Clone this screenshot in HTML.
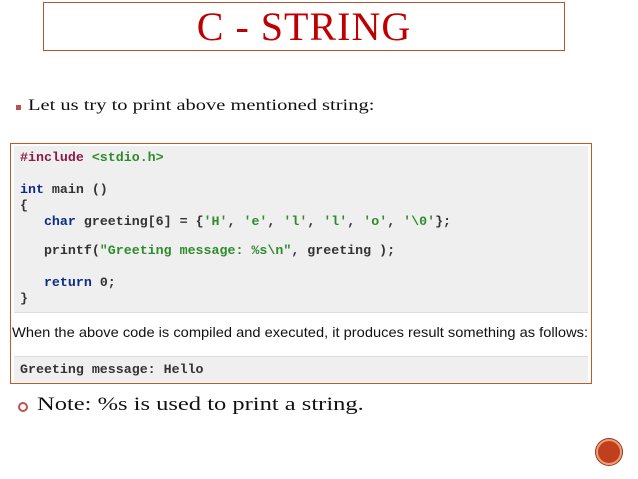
<!DOCTYPE html>
<html><head><style>
body{margin:0;width:638px;height:479px;background:#fff;position:relative;overflow:hidden;font-family:"Liberation Serif",serif}
.t{position:absolute;left:43px;top:2px;width:520px;height:47px;border:1px solid #b5552f;text-align:center;color:#c00000;font-size:40px;line-height:47px;letter-spacing:1px}
.b1{position:absolute;left:28px;top:97px;font-size:16px;color:#111;transform-origin:0 0;transform:scaleX(1.28);white-space:nowrap}
.sq{position:absolute;left:16px;top:105px;width:5px;height:5px;background:#c0504d}
.box{position:absolute;left:10px;top:143px;width:580px;height:239px;border:1px solid #c0582a;background:#fff}
.code{position:absolute;left:3px;top:2px;width:574px;height:166px;background:#efefef;border-bottom:1px solid #ddd}
pre{margin:0;position:absolute;font-family:"Liberation Mono",monospace;font-weight:bold;font-size:13.3px;color:#333}
.k{color:#0b2a8a}.s{color:#2e8b2e}.p{color:#8b1a4a}
.out{position:absolute;left:3px;top:212px;width:574px;height:25px;background:#efefef;border-top:1px solid #ddd}
.msg{position:absolute;left:1px;top:180px;font-family:"Liberation Sans",sans-serif;font-size:14px;color:#111;transform-origin:0 0;transform:scaleX(1.047);white-space:nowrap}
.note{position:absolute;left:37px;top:394px;font-size:19px;color:#111;transform-origin:0 0;transform:scaleX(1.29);white-space:nowrap}
.ci{position:absolute;left:18px;top:402px;width:6px;height:6px;border:2px solid #c0504d;border-radius:50%}
.dot{position:absolute;left:596px;top:439px;width:22px;height:22px;border-radius:50%;background:#c0401e;border:2px solid #e8a080;box-shadow:0 0 0 1px #a03010}
</style></head><body>
<div class="t">C - STRING</div>
<div class="sq"></div><div class="b1">Let us try to print above mentioned string:</div>
<div class="box">
<div class="code">
<pre style="left:6px;top:4px;line-height:16px"><span class="p">#include</span> <span class="s">&lt;stdio.h&gt;</span>

<span class="k">int</span> main ()
{
   <span class="k">char</span> greeting[6] = {<span class="s">'H'</span>, <span class="s">'e'</span>, <span class="s">'l'</span>, <span class="s">'l'</span>, <span class="s">'o'</span>, <span class="s">'\0'</span>};
</pre>
<pre style="left:6px;top:97px">   printf(<span class="s">"Greeting message: %s\n"</span>, greeting );</pre>
<pre style="left:6px;top:129px;line-height:16px">   <span class="k">return</span> 0;
}</pre>
</div>
<div class="msg">When the above code is compiled and executed, it produces result something as follows:</div>
<div class="out"><pre style="left:6px;top:5px">Greeting message: Hello</pre></div>
</div>
<div class="ci"></div><div class="note">Note: %s is used to print a string.</div>
<div class="dot"></div>
</body></html>
